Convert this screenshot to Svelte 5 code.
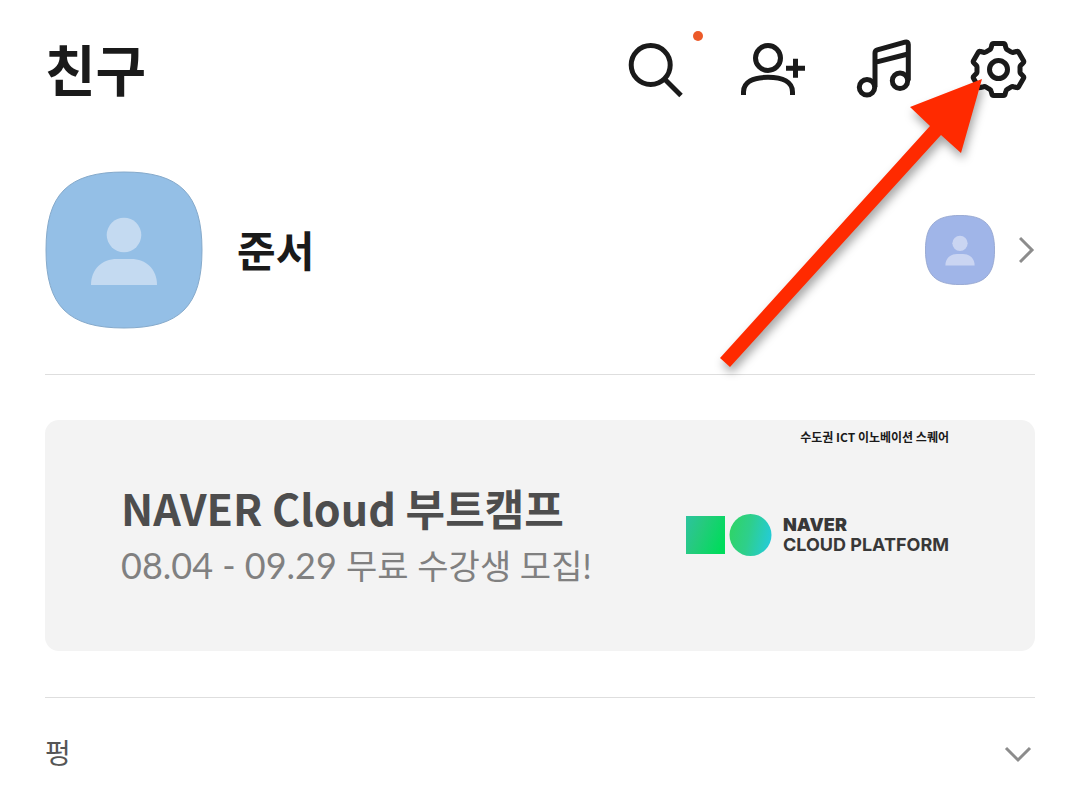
<script lang="ts">
  let name = '준서';
  let expanded = false;

  const squircle = 'M1 79 C1 23 23 1 79 1 S157 23 157 79 S135 157 79 157 S1 135 1 79 Z';

  // six-tooth gear outline, angle is measured clockwise from the top
  function polar(deg: number, r: number) {
    const a = (deg * Math.PI) / 180;
    return `${(31.5 + Math.sin(a) * r).toFixed(2)} ${(33.5 - Math.cos(a) * r).toFixed(2)}`;
  }

  const gear = [0, 60, 120, 180, 240, 300]
    .map((a, i) => `${i ? 'L' : 'M'}${polar(a - 15, 25.5)}
      Q${polar(a - 14, 26.8)} ${polar(a - 10, 26.5)} L${polar(a + 10, 26.5)}
      Q${polar(a + 14, 26.8)} ${polar(a + 15, 25.5)}
      L${polar(a + 19, 22.8)} Q${polar(a + 21, 21.6)} ${polar(a + 25, 21.6)}
      L${polar(a + 35, 21.6)} Q${polar(a + 39, 21.6)} ${polar(a + 41, 22.8)}`)
    .join(' ') + ' Z';
</script>

<main>
  <header>
    <h1>친구</h1>
    <nav>
      <button aria-label="검색">
        <svg viewBox="0 0 68 68">
          <circle cx="25.7" cy="29" r="19.5" />
          <path d="M40 43.5 L56 59.5" />
        </svg>
        <span class="badge"></span>
      </button>
      <button aria-label="친구 추가">
        <svg viewBox="0 0 68 68">
          <circle cx="29" cy="22" r="12.5" />
          <path d="M4.5 59 V56 C4.5 46 14 41.3 29 41.3 S53.5 46 53.5 56 V59" />
          <path d="M47 32.3 H66 M56.5 22.8 V41.8" />
        </svg>
      </button>
      <button aria-label="음악">
        <svg viewBox="0 0 68 68">
          <circle cx="14" cy="51.3" r="7.7" />
          <circle cx="47" cy="44.7" r="7.7" />
          <path d="M22 51 V17 Q22 14.5 24.4 13.8 L52 6.2 Q55.3 5.4 55.3 8.5 V44.5 M22 26.3 L55 18" />
        </svg>
      </button>
      <button aria-label="설정">
        <svg viewBox="0 0 68 68">
          <path stroke-linejoin="round" d={gear} />
          <circle cx="31.5" cy="33.5" r="9" />
        </svg>
      </button>
    </nav>
    <svg class="arrow" viewBox="0 0 300 320" aria-hidden="true">
      <path d="M282 59 L210 87 L230 106 L20 338 L30 347 L241 115 L261 133 Z" />
    </svg>
  </header>

  <section class="profile">
    <svg class="avatar" viewBox="0 0 158 158">
      <path class="shape" d={squircle} />
      <circle cx="79" cy="64" r="17.3" />
      <path class="body" d="M46 114 C46 98 57 88 72 88 H86 C101 88 112 98 112 114 Z" />
    </svg>
    <h2>{name}</h2>
    <button class="multi" aria-label="멀티프로필">
      <svg class="avatar small" viewBox="0 0 158 158">
        <path class="shape" d={squircle} />
        <circle cx="79" cy="64" r="17.3" />
        <path class="body" d="M46 114 C46 98 57 88 72 88 H86 C101 88 112 98 112 114 Z" />
      </svg>
      <svg class="chevron" viewBox="0 0 16 28"><path d="M1 2 L13 14 L1 26" /></svg>
    </button>
  </section>

  <a class="banner" href="#bootcamp">
    <div class="copy">
      <strong>NAVER Cloud 부트캠프</strong>
      <span class="period">08.04 - 09.29 <span class="recruit">무료 수강생 모집!</span></span>
    </div>
    <div class="sponsor">
      <small>수도권 ICT 이노베이션 스퀘어</small>
      <div class="logo">
        <svg viewBox="0 0 86 42">
          <defs>
            <linearGradient id="square" x1="0" y1="0.2" x2="1" y2="0.6">
              <stop offset="0" stop-color="#2bc49a" />
              <stop offset="0.4" stop-color="#24cb7c" />
              <stop offset="1" stop-color="#00dc5c" />
            </linearGradient>
            <linearGradient id="round" x1="0" y1="0.4" x2="1" y2="0.6">
              <stop offset="0" stop-color="#2fd468" />
              <stop offset="0.45" stop-color="#2ecf8c" />
              <stop offset="1" stop-color="#24cbd8" />
            </linearGradient>
          </defs>
          <rect x="0" y="2" width="39" height="38" fill="url(#square)" />
          <circle cx="64.5" cy="21" r="21" fill="url(#round)" />
        </svg>
        <div class="wordmark">
          <b>NAVER</b>
          <span>CLOUD PLATFORM</span>
        </div>
      </div>
    </div>
  </a>

  <button class="group" aria-expanded={expanded} on:click={() => (expanded = !expanded)}>
    <span>펑</span>
    <svg viewBox="0 0 28 20"><path d="M2 5 L14 17 L26 5" /></svg>
  </button>
</main>

<style>
  :global(body) {
    margin: 0;
    background: #fff;
  }

  main {
    padding: 0 45px;
    color: #1a1a1a;
    font-family: 'Noto Sans CJK KR', 'Noto Sans', sans-serif;
  }

  button {
    padding: 0;
    border: none;
    background: none;
    color: inherit;
    font: inherit;
    cursor: pointer;
  }

  svg {
    display: block;
  }

  header {
    position: relative;
    display: flex;
    align-items: flex-start;
    justify-content: space-between;
    height: 140px;
  }

  h1,
  h2 {
    margin: 0;
    font-weight: 700;
  }

  h1 {
    padding-top: 27px;
    font-size: 55px;
    line-height: 80px;
  }

  nav {
    display: flex;
    gap: 46px;
    padding-top: 36px;
  }

  nav button {
    position: relative;
  }

  nav svg {
    width: 68px;
    height: 68px;
    fill: none;
    stroke: #1a1a1a;
    stroke-width: 5;
  }

  .badge {
    position: absolute;
    top: -5px;
    right: -10px;
    width: 10px;
    height: 10px;
    border-radius: 50%;
    background: #ec5a29;
  }

  .arrow {
    position: absolute;
    z-index: 1;
    top: 20px;
    right: 35px;
    width: 300px;
    height: 320px;
    overflow: visible;
    fill: #ff2a00;
    filter: drop-shadow(2px 6px 5px rgba(0, 0, 0, 0.35));
    pointer-events: none;
  }

  .profile {
    display: flex;
    align-items: center;
    padding: 31px 0 45px;
    border-bottom: 1px solid #dedede;
  }

  .profile h2 {
    margin-left: 34px;
    padding-bottom: 3px;
    font-size: 42px;
    line-height: 60px;
  }

  .avatar {
    width: 158px;
    height: 158px;
    fill: #c4daf1;
  }

  .avatar .shape {
    fill: #94bfe6;
    stroke: #86aacb;
    stroke-width: 1;
  }

  .avatar.small {
    width: 70px;
    height: 70px;
    fill: #cad5f2;
  }

  .avatar.small .shape {
    fill: #a0b5e8;
    stroke: #94a5cf;
    stroke-width: 2;
  }

  .multi {
    display: flex;
    align-items: center;
    gap: 24px;
    margin-left: auto;
  }

  .chevron {
    width: 16px;
    height: 28px;
  }

  .chevron,
  .group svg {
    fill: none;
    stroke: #8c8c8c;
    stroke-width: 3;
  }

  .banner {
    display: flex;
    justify-content: space-between;
    margin: 45px 0 46px;
    padding: 0 86px 0 76px;
    border-radius: 14px;
    background: #f3f3f3;
    color: #4d4d4d;
    text-decoration: none;
  }

  .copy {
    display: flex;
    flex-direction: column;
    gap: 3px;
    padding: 57px 0 60px;
  }

  .copy strong {
    font-size: 43px;
    line-height: 60px;
  }

  .period {
    color: #808080;
    font-family: Lato, 'Noto Sans CJK KR', sans-serif;
    font-size: 36px;
    line-height: 51px;
  }

  .recruit {
    font-size: 34px;
  }

  .sponsor {
    display: flex;
    flex-direction: column;
    align-items: flex-end;
    gap: 67px;
    padding-top: 7px;
  }

  small {
    color: #1a1a1a;
    font-size: 12px;
    font-weight: 700;
    line-height: 20px;
  }

  .logo {
    display: flex;
    align-items: center;
    gap: 11px;
  }

  .logo svg {
    width: 86px;
    height: 42px;
  }

  .wordmark {
    display: flex;
    flex-direction: column;
    color: #383838;
    font-family: Inter, sans-serif;
    font-size: 18px;
    font-weight: 700;
    line-height: 20px;
  }

  .wordmark b {
    font-weight: 900;
  }

  .group {
    display: flex;
    align-items: center;
    justify-content: space-between;
    width: 100%;
    padding: 34px 3px 14px 0;
    border-top: 1px solid #dedede;
    color: #555;
    font-size: 28px;
    line-height: 41px;
  }

  .group svg {
    width: 28px;
    height: 20px;
  }
</style>
